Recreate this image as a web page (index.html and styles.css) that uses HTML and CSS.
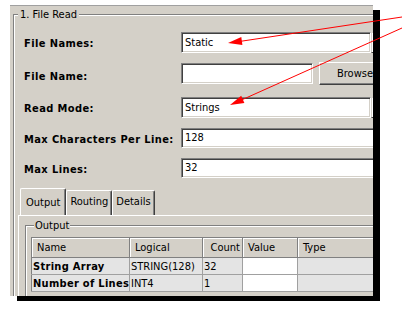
FILE: index.html
```html
<!DOCTYPE html>
<html lang="en">

<head>
    <meta charset="UTF-8">
    <title>File Read</title>
    <link rel="stylesheet" href="styles.css">
</head>

<body>
    <div class="window">
        <fieldset class="group">
            <legend>1. File Read</legend>
            <div class="row first">
                <label>File Names:</label>
                <div class="combo"><span class="field">Static</span><span class="drop"></span></div>
            </div>
            <div class="row row-browse">
                <label>File Name:</label>
                <span class="field short"></span>
                <button class="browse">Browse</button>
            </div>
            <div class="row">
                <label>Read Mode:</label>
                <div class="combo"><span class="field">Strings</span><span class="drop"></span></div>
            </div>
            <div class="row thin">
                <label>Max Characters Per Line:</label>
                <span class="field wide">128</span>
            </div>
            <div class="row thin">
                <label>Max Lines:</label>
                <span class="field wide">32</span>
            </div>
            <div class="tabs">
                <span class="tab active">Output</span>
                <span class="tab">Routing</span>
                <span class="tab">Details</span>
            </div>
            <div class="page">
                <fieldset class="output">
                    <legend>Output</legend>
                    <table class="grid">
                        <tr class="head">
                            <th class="c-name">Name</th>
                            <th class="c-logical">Logical</th>
                            <th class="c-count">Count</th>
                            <th class="c-value">Value</th>
                            <th class="c-type">Type</th>
                        </tr>
                        <tr>
                            <td class="bold">String Array</td>
                            <td>STRING(128)</td>
                            <td>32</td>
                            <td class="white"></td>
                            <td></td>
                        </tr>
                        <tr>
                            <td class="bold">Number of Lines</td>
                            <td>INT4</td>
                            <td>1</td>
                            <td class="white"></td>
                            <td></td>
                        </tr>
                    </table>
                </fieldset>
            </div>
        </fieldset>
    </div>
    <!-- callout arrows -->
    <svg class="arrows" width="402" height="311" viewBox="0 0 402 311">
        <line x1="402" y1="17" x2="236" y2="42" stroke="#f00" stroke-width="1"/>
        <polygon points="228,43 242.4,44.9 241.3,37" fill="#f00"/>
        <line x1="402" y1="28" x2="237" y2="102" stroke="#f00" stroke-width="1"/>
        <polygon points="230,105 244.4,103 241.2,95.7" fill="#f00"/>
    </svg>
</body>

</html>
```

FILE: styles.css
```css
* {
    margin: 0;
    padding: 0;
    box-sizing: border-box;
}

body {
    position: relative;
    width: 402px;
    height: 311px;
    overflow: hidden;
    background: #fff;
    font-family: "DejaVu Sans Condensed", "DejaVu Sans", sans-serif;
    font-size: 11px;
    color: #000;
}

.window {
    margin: 5px 0 0 10px;
    width: 363px;
    height: 291px;
    background: #d4d0c8;
    border-top: 1px solid #a0a0a0;
    box-shadow: 7px 5px 0 #000;
    overflow: hidden;
}

.group {
    margin: 2px 0 0 3px;
    width: 420px;
    height: 400px;
    min-width: 0;
    border: 1px solid #808080;
    box-shadow: inset 1px 1px 0 #fff, 1px 1px 0 #fff;
}

.group > legend {
    margin-left: 4px;
    padding: 0 2px;
    line-height: 13px;
    background: #d4d0c8;
}

.row {
    display: flex;
    align-items: center;
    height: 21px;
    margin: 11px 0 0 10px;
}

.row.first {
    margin-top: 11px;
}

.row.row-browse {
    align-items: flex-start;
    height: 23px;
    margin-top: 10px;
}

.row-browse label {
    line-height: 23px;
}

.row.thin {
    height: 20px;
    margin-top: 10px;
}

.row label {
    width: 157px;
    padding-top: 2px;
    font-weight: bold;
    letter-spacing: 0.4px;
    flex-shrink: 0;
}

.field {
    display: block;
    height: 100%;
    padding-left: 3px;
    background: #fff;
    border: 1px solid;
    border-color: #808080 #fff #fff #808080;
    box-shadow: inset 1px 1px 0 #404040, inset -1px -1px 0 #d4d0c8;
    line-height: 19px;
    white-space: nowrap;
}

.row.thin .field {
    line-height: 18px;
}

.combo {
    display: flex;
    height: 21px;
}

.combo .field {
    width: 190px;
}

.drop {
    width: 16px;
    height: 100%;
    background: #d4d0c8;
    border: 1px solid;
    border-color: #d4d0c8 #404040 #404040 #d4d0c8;
    box-shadow: inset 1px 1px 0 #fff;
}

.field.short {
    width: 132px;
    height: 21px;
}

.field.wide {
    width: 220px;
}

.browse {
    margin-left: 6px;
    width: 80px;
    height: 23px;
    margin-top: -1px;
    padding-left: 17px;
    text-align: left;
    font: inherit;
    background: #d4d0c8;
    border: 1px solid;
    border-color: #fff #404040 #404040 #fff;
    box-shadow: inset -1px -1px 0 #808080;
}

.tabs {
    display: flex;
    align-items: flex-end;
    height: 27px;
    margin: 10px 0 0 6px;
}

.tab {
    height: 25px;
    padding: 0 3px;
    line-height: 22px;
    border: 1px solid;
    border-bottom: 0;
    border-color: #fff #404040 #fff #fff;
    border-radius: 2px 2px 0 0;
    box-shadow: inset -1px 0 0 #808080;
}

.tab.active {
    height: 27px;
    padding: 0 5px;
    line-height: 28px;
}

.page {
    margin-left: 4px;
    height: 200px;
    border-top: 1px solid #fff;
    border-left: 1px solid #fff;
    padding: 3px 0 0 6px;
}

.output {
    min-width: 0;
    width: 380px;
    height: 150px;
    border: 1px solid #808080;
    box-shadow: inset 1px 1px 0 #fff, 1px 1px 0 #fff;
    padding: 5px 0 0 5px;
}

.output > legend {
    margin-left: 3px;
    padding: 0 1px;
    line-height: 13px;
    background: #d4d0c8;
}

.grid {
    border-collapse: collapse;
    table-layout: fixed;
    width: 360px;
    border-top: 1px solid #808080;
    border-left: 1px solid #808080;
}

.grid th {
    height: 20px;
    padding: 0 5px;
    text-align: left;
    font-weight: normal;
    background: #d4d0c8;
    border-right: 1px solid #808080;
    border-bottom: 1px solid #808080;
    box-shadow: inset 1px 1px 0 #fff;
}

.grid th.c-count {
    text-align: right;
    padding-right: 2px;
}

.grid td {
    height: 17px;
    padding: 0 1px;
    background: #e4e4e4;
    border-right: 1px solid #a0a0a0;
    border-bottom: 1px solid #a0a0a0;
    white-space: nowrap;
}

.grid td.bold {
    font-weight: bold;
    letter-spacing: 0.3px;
}

.grid td.white {
    background: #fff;
}

.c-name { width: 98px; }
.c-logical { width: 73px; }
.c-count { width: 40px; }
.c-value { width: 55px; }
.c-type { width: 94px; }

.arrows {
    position: absolute;
    left: 0;
    top: 0;
}
```
